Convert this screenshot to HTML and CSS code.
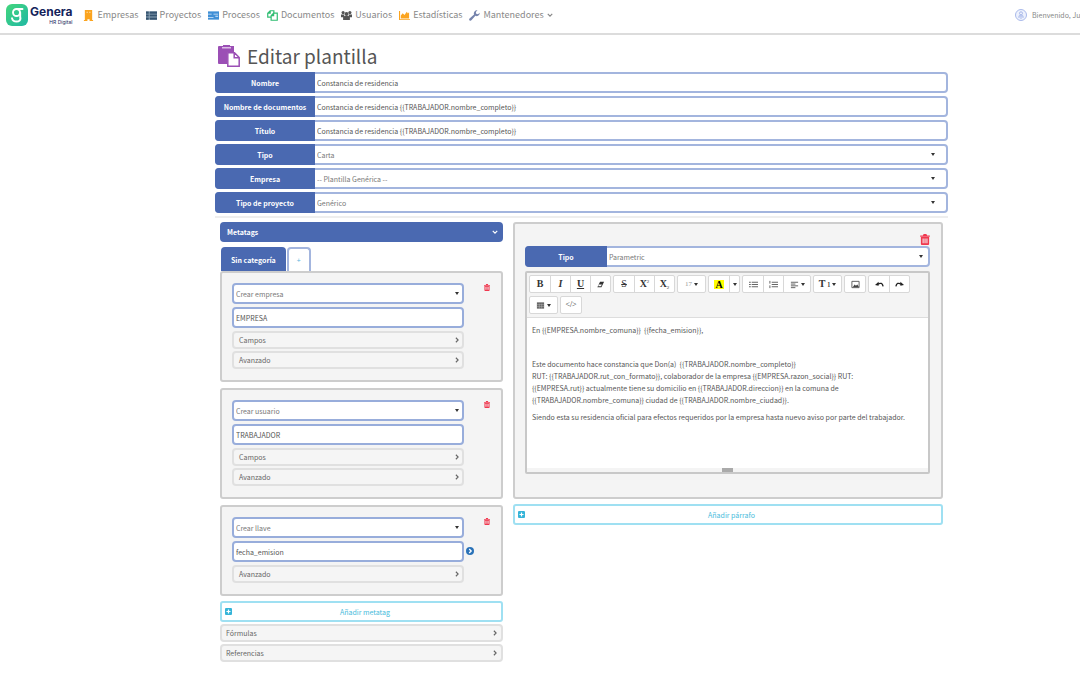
FILE: index.html
```html
<!DOCTYPE html>
<html lang="es">
<head>
<meta charset="utf-8">
<title>Editar plantilla</title>
<link rel="stylesheet" href="styles.css">
</head>
<body>
<svg class="defs" aria-hidden="true">
  <symbol id="trash" viewBox="0 0 14 16"><path fill-rule="evenodd" d="M5 0h4l1 2h4v2H0V2h4zM1 4.500h12V14.500a1.500 1.500 0 0 1-1.500 1.500h-9A1.500 1.500 0 0 1 1 14.500zM3.500 6.500v7h1.500v-7zM6.300 6.500v7h1.500v-7zM9.100 6.500v7h1.500v-7z"/></symbol>
  <symbol id="right" viewBox="0 0 8 8"><path d="M2.500 1l3 3-3 3" fill="none" stroke="currentColor" stroke-width="1.500"/></symbol>
  <symbol id="down" viewBox="0 0 8 8"><path d="M1 2.500l3 3 3-3" fill="none" stroke="currentColor" stroke-width="1.600"/></symbol>
  <symbol id="plus" viewBox="0 0 8 8"><path fill-rule="evenodd" d="M1.200 0h5.600A1.200 1.200 0 0 1 8 1.200v5.600A1.200 1.200 0 0 1 6.800 8H1.200A1.200 1.200 0 0 1 0 6.800V1.200A1.200 1.200 0 0 1 1.200 0zM3.300 1.700v1.600H1.700v1.400h1.600v1.600h1.400V4.700h1.600V3.300H4.700V1.700z"/></symbol>
</svg>

<header class="topbar">
  <a class="brand" href="#">
    <svg class="brand-mark" viewBox="0 0 22 22" aria-hidden="true">
      <defs><linearGradient id="g" x1="0" y1="0" x2="1" y2="1"><stop offset="0" stop-color="#43d67c"/><stop offset="1" stop-color="#20b8a4"/></linearGradient></defs>
      <rect width="22" height="22" rx="6" fill="url(#g)"/>
      <g fill="none" stroke="#fff" stroke-width="1.900" stroke-linecap="round"><circle cx="10.500" cy="8.500" r="3.500"/><path d="M11 5h5.500M6 14.200c1 4.500 8.500 4.500 8.500-.2M14.200 8.500v5.500"/></g>
    </svg>
    <span class="brand-name">Genera<small>HR Digital</small></span>
  </a>
  <nav class="menu">
    <a href="#"><svg viewBox="0 0 10 12" fill="#fba41f"><path fill-rule="evenodd" d="M1 0h8v11h1v1H6.200V10H3.800V12H0v-1h1zM3 2v1h1V2zM6 2v1h1V2z"/></svg>Empresas</a>
    <a href="#"><svg viewBox="0 0 12 12"><path fill="#8fa6b8" d="M0 1.500h12v9H0z"/><path fill="#35536f" d="M0 1.500h3v2.500H0zM4 1.500h8v2.500H4zM0 5h3v2.200H0zM4 5h8v2.200H4zM0 8.200h3v2.300H0zM4 8.200h8v2.300H4z"/></svg>Proyectos</a>
    <a href="#"><svg viewBox="0 0 12 12"><path fill="#3f8fd6" d="M0 1.500h12v9H0z"/><path d="M0 4h4v1H0zM6 4h5v1H6zM0 7.500h6v1H0zM8 6.300h3v1H8z" fill="#d9eafa"/></svg>Procesos</a>
    <a href="#"><svg viewBox="0 0 12 12" fill="#fff" stroke="#2fbd72" stroke-width="1.300"><path d="M3.500.8h4v7H.8V3.500zM.8 3.500h2.700V.8"/><path d="M7.200 3.500h4v7.700H4.500V6.200zM4.500 6.200h2.700V3.500"/></svg>Documentos</a>
    <a href="#"><svg viewBox="0 0 12 12" fill="#555"><circle cx="2.300" cy="2.800" r="1.700"/><circle cx="9.700" cy="2.800" r="1.700"/><circle cx="6" cy="4.300" r="2.200"/><path d="M0 5h3.500v3H0zM8.500 5H12v3H8.500zM2.300 8.200Q2.500 6.500 4 6.500h4q1.500 0 1.700 1.700V11H2.300z"/></svg>Usuarios</a>
    <a href="#"><svg viewBox="0 0 12 12" fill="#fba41f"><path d="M0 1h1.200v9H12v1H0zM2 9.300V6l2-2.500 2 2L8.500 2l1.200 1.800L11 2.500v6.800z"/></svg>Estadísticas</a>
    <a href="#"><svg viewBox="0 0 12 12" fill="#7684ad"><path d="M11.700 3.100A3.400 3.400 0 0 1 7 6.400L2.600 11.300a1.300 1.300 0 0 1-2-1.900L5.500 5A3.400 3.400 0 0 1 9.300.4L7.500 2.200l.3 1.900 2 .4z"/></svg>Mantenedores<svg class="caret" viewBox="0 0 8 8"><use href="#down"/></svg></a>
  </nav>
  <a class="user" href="#"><svg viewBox="0 0 12 12" fill="none" stroke="#a9b9ea"><circle cx="6" cy="6" r="5.500" fill="#eef2fd"/><circle cx="6" cy="4.300" r="1.500"/><path d="M4 9V6.800h4V9M6 7v3"/></svg>Bienvenido, Ju</a>
</header>

<main class="page">
  <div class="content">
    <h1 class="title"><svg viewBox="0 0 22 22" aria-hidden="true"><path fill="#9b4fb5" d="M1 1h4V0h7v1h4v6H9v12H1q-1 0-1-1V2q0-1 1-1z"/><path fill="#dcbce6" d="M4 2h9v1.500H4z"/><path fill="#fff" stroke="#9b4fb5" stroke-width="1.500" d="M9.800 7.800h6.700l4.700 4.700v8.700H9.800zM16.200 7.800v5h5"/></svg>Editar plantilla</h1>

    <form class="fields">
      <div class="field"><label for="f1">Nombre</label><input id="f1" value="Constancia de residencia"></div>
      <div class="field"><label for="f2">Nombre de documentos</label><input id="f2" value="Constancia de residencia {{TRABAJADOR.nombre_completo}}"></div>
      <div class="field"><label for="f3">Título</label><input id="f3" value="Constancia de residencia {{TRABAJADOR.nombre_completo}}"></div>
      <div class="field pick"><label for="f4">Tipo</label><select id="f4"><option>Carta</option></select></div>
      <div class="field pick"><label for="f5">Empresa</label><select id="f5"><option>-- Plantilla Genérica --</option></select></div>
      <div class="field pick"><label for="f6">Tipo de proyecto</label><select id="f6"><option>Genérico</option></select></div>
    </form>

    <div class="columns">
      <section class="meta">
        <button class="heading">Metatags<svg><use href="#down"/></svg></button>
        <div class="tabs"><button class="tab active">Sin categoría</button><button class="tab">+</button></div>
        <div class="cards">
          <div class="card">
            <div class="stack">
              <div class="box pick"><select aria-label="Acción"><option>Crear empresa</option></select></div>
              <div class="box"><input aria-label="Nombre del metatag" value="EMPRESA"></div>
              <div class="folds"><button class="fold">Campos<svg><use href="#right"/></svg></button><button class="fold">Avanzado<svg><use href="#right"/></svg></button></div>
            </div>
            <button class="trash" aria-label="Eliminar"><svg><use href="#trash"/></svg></button>
          </div>
          <div class="card">
            <div class="stack">
              <div class="box pick"><select aria-label="Acción"><option>Crear usuario</option></select></div>
              <div class="box"><input aria-label="Nombre del metatag" value="TRABAJADOR"></div>
              <div class="folds"><button class="fold">Campos<svg><use href="#right"/></svg></button><button class="fold">Avanzado<svg><use href="#right"/></svg></button></div>
            </div>
            <button class="trash" aria-label="Eliminar"><svg><use href="#trash"/></svg></button>
          </div>
          <div class="card">
            <div class="stack">
              <div class="box pick"><select aria-label="Acción"><option>Crear llave</option></select></div>
              <div class="box"><input aria-label="Nombre del metatag" value="fecha_emision"><button class="go" aria-label="Ver"><svg viewBox="0 0 8 8"><circle cx="4" cy="4" r="4" fill="#2a72b8"/><path d="M3.200 2l2 2-2 2" fill="none" stroke="#fff" stroke-width="1.300"/></svg></button></div>
              <div class="folds"><button class="fold">Avanzado<svg><use href="#right"/></svg></button></div>
            </div>
            <button class="trash" aria-label="Eliminar"><svg><use href="#trash"/></svg></button>
          </div>
        </div>
        <button class="add"><svg><use href="#plus"/></svg><span>Añadir metatag</span></button>
        <div class="folds outer"><button class="fold">Fórmulas<svg><use href="#right"/></svg></button><button class="fold">Referencias<svg><use href="#right"/></svg></button></div>
      </section>

      <section class="body">
        <div class="card paragraph">
          <button class="trash big" aria-label="Eliminar"><svg><use href="#trash"/></svg></button>
          <div class="field pick"><label for="p1">Tipo</label><select id="p1"><option>Parametric</option></select></div>
          <div class="editor">
            <div class="toolbar">
              <div class="group"><button><b>B</b></button><button><b><i>I</i></b></button><button><b><u>U</u></b></button><button aria-label="Borrar formato"><svg viewBox="0 0 10 10"><path fill="#333" d="M4.500 2H9L6 8H1.500zM3.300 5L2.500 7h3l1-2z" fill-rule="evenodd"/></svg></button></div>
              <div class="group"><button><s>S</s></button><button><b>X</b><sup>2</sup></button><button><b>X</b><sub>2</sub></button></div>
              <div class="group"><button class="wide light">17<span class="tri"></span></button></div>
              <div class="group"><button><mark>A</mark></button><button class="slim" aria-label="Más colores"><span class="tri"></span></button></div>
              <div class="group"><button aria-label="Viñetas"><svg viewBox="0 0 10 10" stroke="#555"><path d="M0 2.500h2M3 2.500h7M0 5h2M3 5h7M0 7.500h2M3 7.500h7"/></svg></button><button aria-label="Numeración"><svg viewBox="0 0 10 10" stroke="#555"><path d="M1 1v3M1 6v3M3 2.500h7M3 5h7M3 7.500h7"/></svg></button><button class="wide" aria-label="Alinear"><svg viewBox="0 0 10 10" stroke="#555"><path d="M1 2.500h8M1 4.500h5M1 6.500h8M1 8.500h5"/></svg><span class="tri"></span></button></div>
              <div class="group"><button class="wide"><b>T</b>ı<span class="tri"></span></button></div>
              <div class="group"><button aria-label="Imagen"><svg viewBox="0 0 10 10"><path d="M1 1.500h8v7H1z" fill="none" stroke="#555"/><path d="M2 8l2-3 1.500 1.500L7 5l2 3z" fill="#444"/></svg></button></div>
              <div class="group"><button aria-label="Deshacer"><svg viewBox="0 0 10 10"><path d="M3 4.500Q8 2 9 7" fill="none" stroke="#222" stroke-width="1.500"/><path d="M0 5.500L4 2v4.500z" fill="#222"/></svg></button><button aria-label="Rehacer"><svg viewBox="0 0 10 10"><path d="M7 4.500Q2 2 1 7" fill="none" stroke="#222" stroke-width="1.500"/><path d="M10 5.500L6 2v4.500z" fill="#222"/></svg></button></div>
              <div class="group"><button class="wide" aria-label="Tabla"><svg viewBox="0 0 10 10"><path d="M1 1.500h8v7H1z" fill="#666"/><path d="M1 4h8M1 6.200h8M3.700 3v5.500M6.300 3v5.500" stroke="#bbb" stroke-width=".5"/></svg><span class="tri"></span></button></div>
              <div class="group"><button class="code">&lt;/&gt;</button></div>
            </div>
            <div class="text" contenteditable="true" role="textbox" aria-label="Contenido" spellcheck="false">
              <p>En {{EMPRESA.nombre_comuna}}&nbsp; {{fecha_emision}},</p>
              <p><br></p>
              <p>Este documento hace constancia que Don(a)&nbsp; {{TRABAJADOR.nombre_completo}}<br>RUT: {{TRABAJADOR.rut_con_formato}}, colaborador de la empresa {{EMPRESA.razon_social}} RUT:<br>{{EMPRESA.rut}} actualmente tiene su domicilio en {{TRABAJADOR.direccion}} en la comuna de<br>{{TRABAJADOR.nombre_comuna}} ciudad de {{TRABAJADOR.nombre_ciudad}}.</p>
              <p>Siendo esta su residencia oficial para efectos requeridos por la empresa hasta nuevo aviso por parte del trabajador.</p>
            </div>
            <div class="grip"><span></span></div>
          </div>
        </div>
        <button class="add"><svg><use href="#plus"/></svg><span>Añadir párrafo</span></button>
      </section>
    </div>
  </div>
</main>
</body>
</html>
```
FILE: styles.css
```css
* { box-sizing: border-box; }
body, h1, p { margin: 0; }
body {
  background: #fff;
  color: #555;
  font: 7px/12px "Noto Sans CJK SC", "Noto Sans", sans-serif;
}
button, input, select { font: inherit; color: inherit; margin: 0; padding: 0; border: 0; background: none; min-width: 0; border-radius: 0; }
button { cursor: pointer; }
a { color: inherit; text-decoration: none; }
.defs { display: none; }

.topbar { display: flex; align-items: center; height: 35px; padding: 0 0 3px 6px; border-bottom: 2px solid #dcdcdc; font-size: 9px; color: #888; white-space: nowrap; }
.brand { display: flex; align-items: center; gap: 2px; }
.brand-mark { width: 22px; height: 22px; }
.brand-name { display: flex; flex-direction: column; color: #14235a; font: 700 12px/14px Inter, sans-serif; }
.brand-name small { align-self: flex-end; font: 400 5px/7px Inter, sans-serif; }
.menu { display: flex; gap: 7px; margin-left: 11px; flex: 1; }
.menu a { display: flex; align-items: center; gap: 3px; }
.menu svg { width: 11px; height: 11px; }
.menu .caret { width: 6px; height: 6px; }
.user { display: flex; align-items: center; gap: 5px; width: 65px; font-size: 7px; }
.user svg { width: 12px; height: 12px; flex: none; }

.page { display: grid; grid-template-columns: 215fr 733fr 132fr; }
.content { grid-column: 2; min-width: 0; padding-top: 9px; }
.title { display: flex; align-items: center; gap: 7px; padding-left: 3px; color: #555; font-size: 19px; line-height: 24px; font-weight: 400; }
.title svg { width: 22px; height: 22px; }

.fields { display: grid; gap: 3px; padding: 4px 0 3px; border-bottom: 2px solid #eee; }
.field, .box { display: flex; position: relative; height: 21px; border: 2px solid #a3b5de; border-radius: 4px; background: #fff; }
.field label { display: flex; align-items: center; justify-content: center; width: 100px; margin: -2px 0 -2px -2px; background: #4a69b1; border-radius: 4px 0 0 4px; color: #fff; font-weight: 700; }
.field input, .field select, .box input, .box select { flex: 1; padding: 0 2px; outline: 0; appearance: none; }
.field select, .box select { color: #777; }
.pick::after, .tri { border: 2px solid transparent; border-top: 3px solid #333; border-bottom: 0; }
.pick::after { content: ""; position: absolute; right: 11px; top: 7px; pointer-events: none; }

.columns { display: grid; grid-template-columns: 283fr 430fr; gap: 10px; padding: 4px 5px 0; align-items: start; }
.meta, .body { min-width: 0; }
.heading { display: flex; align-items: center; justify-content: space-between; width: 100%; height: 20px; padding: 0 5px 0 7px; border-radius: 4px; background: #4a69b1; color: #fff; font-weight: 700; }
.heading svg, .fold svg { width: 6px; height: 6px; }
.tabs { display: flex; gap: 1px; margin-top: 5px; padding-left: 1px; }
.tab { height: 24px; padding: 0 8px; border: 2px solid #a3b5de; border-bottom: 0; border-radius: 4px 4px 0 0; color: #5bb5de; }
.tab.active { border-color: #4a69b1; background: #4a69b1; color: #fff; font-weight: 700; }

.cards { display: grid; gap: 6px; }
.card { display: grid; grid-template-columns: 1fr 27px; border: 2px solid #cdcdcd; border-radius: 3px; background: #f4f4f4; padding: 10px 10px 11px; }
.stack { display: grid; gap: 3px; min-width: 0; }
.box.pick::after { right: 3px; }
.box { border-color: #98addb; }
.card .trash { justify-self: end; align-self: start; margin: 1px 1px 0 0; }
.trash { display: flex; }
.trash svg { width: 6px; height: 7px; fill: #f0384f; }
.go { position: absolute; left: 100%; top: 4px; margin-left: 4px; }
.go svg { display: block; width: 8px; height: 8px; }
.folds { display: grid; gap: 2px; }
.fold { display: flex; align-items: center; justify-content: space-between; width: 100%; height: 18px; padding: 0 2px 0 5px; border: 2px solid #e0e0e0; border-radius: 4px; background: #f5f5f5; color: #666; }
.outer { margin-top: 2px; }
.outer .fold { padding: 0 3px 0 4px; }
.add { display: flex; align-items: center; width: 100%; height: 21px; margin-top: 5px; padding: 0 3px; border: 2px solid #9fe0f2; border-radius: 3px; color: #46bbdb; }
.add svg { width: 7px; height: 7px; fill: #35b4d8; }
.add span { flex: 1; }

.paragraph { display: block; padding: 10px 11px 23px 10px; }
.card .trash.big { margin: 0 0 1px auto; }
.big svg { width: 10px; height: 11px; }
.paragraph .field label { width: 82px; }
.paragraph .field.pick::after { right: 5px; }
.editor { margin-top: 4px; border: 2px solid #c8c8c8; border-radius: 2px; background: #fff; }
.toolbar { display: flex; flex-wrap: wrap; gap: 3px 2px; padding: 2px 12px 3px 2px; background: #f4f4f4; border-bottom: 1px solid #ddd; }
.group { display: flex; border: 1px solid #d8d8d8; border-radius: 2px; background: #fff; }
.group button { display: flex; align-items: center; justify-content: center; width: 20px; height: 16px; color: #333; font: 10px/12px "Liberation Serif", serif; }
.group button + button { border-left: 1px solid #d8d8d8; }
.group svg { width: 9px; height: 9px; }
.group .wide { width: 27px; gap: 2px; }
.group .slim { width: 10px; }
.group .light { color: #999; font-size: 7px; }
.group .code { font-size: 8px; }
.group mark { padding: 0 1px; line-height: 9px; background: #ff0; font-weight: 700; }
.group sup, .group sub { font-size: 5px; line-height: 5px; }
.group sup { align-self: flex-start; padding-top: 3px; }
.group sub { align-self: flex-end; padding-bottom: 2px; }
.text { min-height: 150px; padding: 6px 5px; outline: 0; }
.text p { margin-bottom: 5px; }
.grip { display: flex; justify-content: center; height: 4px; background: #f4f4f4; }
.grip span { width: 11px; background: #aaa; }
```
